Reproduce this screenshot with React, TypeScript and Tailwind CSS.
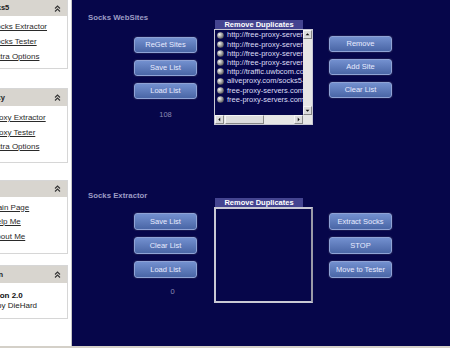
import React from "react";

const Chevron = () => (
  <svg width="7" height="7" viewBox="0 0 7 7" className="shrink-0">
    <path d="M1 3.5 L3.5 1 L6 3.5 M1 6.5 L3.5 4 L6 6.5" fill="none" stroke="#333" strokeWidth="1.1" />
  </svg>
);

const Panel = ({
  title,
  titleMl,
  headerH,
  mt,
  bodyCls,
  children,
}: {
  title: string;
  titleMl: string;
  headerH: string;
  mt: string;
  bodyCls: string;
  children: React.ReactNode;
}) => (
  <div className={`${mt} ml-[-40px] w-[108px] border border-[#d6d6d6] bg-white`}>
    <div className={`${headerH} flex items-center bg-[#d8d5cf]`}>
      <span className={`${titleMl} flex-1 whitespace-nowrap text-[7.5px] font-bold text-[#222]`}>{title}</span>
      <span className="mr-[6px]">
        <Chevron />
      </span>
    </div>
    <div className={bodyCls}>{children}</div>
  </div>
);

const Link = ({ t }: { t: string }) => (
  <div className="ml-[30px] whitespace-nowrap text-[8px] text-[#2a2a2a] underline">{t}</div>
);

const Btn = ({ t, h = "h-[16px]" }: { t: string; h?: string }) => (
  <div
    className={`${h} flex w-[63px] items-center justify-center rounded-[3px] border border-[#8fa3d6] bg-linear-to-b from-[#7390cf] to-[#4a66a6] text-[7.5px] text-[#e8ebff] shadow-[0_0_0_1px_#161650]`}
  >
    {t}
  </div>
);

const Globe = () => (
  <svg width="7" height="7" viewBox="0 0 7 7" className="shrink-0">
    <defs>
      <radialGradient id="g" cx="0.35" cy="0.35" r="0.7">
        <stop offset="0" stopColor="#f4f4f4" />
        <stop offset="0.6" stopColor="#9a9a9a" />
        <stop offset="1" stopColor="#555" />
      </radialGradient>
    </defs>
    <circle cx="3.5" cy="3.5" r="3.3" fill="url(#g)" />
  </svg>
);

const Arrow = ({ dir }: { dir: "up" | "down" | "left" | "right" }) => {
  const d =
    dir === "up"
      ? "M2 5.5 L4.5 3 L7 5.5 Z"
      : dir === "down"
      ? "M2 3.5 L4.5 6 L7 3.5 Z"
      : dir === "left"
      ? "M5.5 2 L3 4.5 L5.5 7 Z"
      : "M3.5 2 L6 4.5 L3.5 7 Z";
  return (
    <div className="flex h-[9px] w-[9px] items-center justify-center border border-[#f4f4f4] border-b-[#888] border-r-[#888] bg-[#dcdcdc]">
      <svg width="9" height="9" viewBox="0 0 9 9">
        <path d={d} fill="#111" />
      </svg>
    </div>
  );
};

const urls = [
  "http://free-proxy-servers.com/",
  "http://free-proxy-servers.com/",
  "http://free-proxy-servers.com/",
  "http://free-proxy-servers.com/",
  "http://traffic.uwbcom.com/",
  "aliveproxy.com/socks5-list/",
  "free-proxy-servers.com/socks",
  "free-proxy-servers.com/socks",
];

export default function App() {
  return (
    <div className="flex h-[348px] w-[450px] flex-col overflow-hidden font-['Liberation_Sans',Arial,sans-serif]">
      <div className="flex h-[346px]">
        {/* sidebar */}
        <div className="w-[72px] shrink-0 overflow-hidden border-r border-[#c4c4c4] bg-white">
          <Panel title="Socks5" titleMl="ml-[22px]" headerH="h-[16px]" mt="mt-[-1px]" bodyCls="pt-[3px] pb-[4px] leading-[15px]">
            <Link t="Socks Extractor" />
            <Link t="Socks Tester" />
            <Link t="Extra Options" />
          </Panel>
          <Panel title="Proxy" titleMl="ml-[23px]" headerH="h-[17px]" mt="mt-[19px]" bodyCls="pt-[5px] pb-[7px] leading-[14.5px]">
            <Link t="Proxy Extractor" />
            <Link t="Proxy Tester" />
            <Link t="Extra Options" />
          </Panel>
          <Panel title="Menu" titleMl="ml-[10px]" headerH="h-[16px]" mt="mt-[17px]" bodyCls="pt-[4px] pb-[9px] leading-[14.5px]">
            <Link t="Main Page" />
            <Link t="Help Me" />
            <Link t="About Me" />
          </Panel>
          <Panel title="Version" titleMl="ml-[15px]" headerH="h-[17px]" mt="mt-[11px]" bodyCls="pt-[8px] pb-[7px] leading-[10px]">
            <div className="ml-[19.5px] whitespace-nowrap text-[8px] font-bold text-[#111]">Version 2.0</div>
            <div className="ml-[36px] whitespace-nowrap text-[8px] text-[#222]">by DieHard</div>
          </Panel>
        </div>

        {/* main */}
        <div className="flex-1 bg-[#06064a]">
          {/* section 1 */}
          <div className="flex items-start">
            <div className="w-[142px] shrink-0">
              <div className="ml-[16px] mt-[14px] whitespace-nowrap text-[7.8px] font-bold leading-[8px] text-[#9c9cc4]">
                Socks WebSites
              </div>
              <div className="ml-[62px] mt-[15px] flex w-[63px] flex-col gap-[7px]">
                <Btn t="ReGet Sites" />
                <Btn t="Save List" />
                <Btn t="Load List" />
              </div>
              <div className="ml-[62px] mt-[12px] w-[63px] text-center text-[7.5px] leading-[8px] text-[#8a8ab4]">108</div>
            </div>
            <div className="mt-[20px] w-[99px]">
              <div className="ml-[1px] h-[9px] w-[88px] bg-[#444490] text-center text-[7.5px] font-bold leading-[9px] text-white">
                Remove Duplicates
              </div>
              <div className="flex h-[96px] flex-col border border-[#c8c8d4] bg-[#06064a]">
                <div className="flex min-h-0 flex-1">
                  <div className="min-w-0 flex-1 overflow-hidden pt-[0.5px]">
                    {urls.map((u, i) => (
                      <div key={i} className="flex h-[9.2px] items-center gap-[3px] pl-[2px] whitespace-nowrap text-[7.5px] text-[#dcdcf4]">
                        <Globe />
                        <span>{u}</span>
                      </div>
                    ))}
                  </div>
                  <div className="flex w-[9px] flex-col bg-[#e6e6e6]">
                    <Arrow dir="up" />
                    <div className="flex-1" />
                    <Arrow dir="down" />
                  </div>
                </div>
                <div className="flex h-[9px] bg-[#e6e6e6]">
                  <Arrow dir="left" />
                  <div className="ml-[1px] h-[9px] w-[39px] border border-[#f4f4f4] border-b-[#888] border-r-[#888] bg-[#dcdcdc]" />
                  <div className="flex-1" />
                  <Arrow dir="right" />
                  <div className="w-[9px] bg-[#e6e6e6]" />
                </div>
              </div>
            </div>
            <div className="ml-[16px] mt-[36px] flex flex-col gap-[7px]">
              <Btn t="Remove" />
              <Btn t="Add Site" />
              <Btn t="Clear List" />
            </div>
          </div>

          {/* section 2 */}
          <div className="mt-[53px] flex items-start">
            <div className="w-[142px] shrink-0">
              <div className="ml-[16px] mt-[14px] whitespace-nowrap text-[7.8px] font-bold leading-[8px] text-[#9c9cc4]">
                Socks Extractor
              </div>
              <div className="ml-[62px] mt-[13px] flex w-[63px] flex-col gap-[7px]">
                <Btn t="Save List" h="h-[17px]" />
                <Btn t="Clear List" h="h-[17px]" />
                <Btn t="Load List" h="h-[17px]" />
              </div>
              <div className="ml-[69px] mt-[10px] w-[63px] text-center text-[7.5px] leading-[8px] text-[#8a8ab4]">0</div>
            </div>
            <div className="mt-[20px] w-[99px]">
              <div className="ml-[1px] h-[9px] w-[88px] bg-[#444490] text-center text-[7.5px] font-bold leading-[9px] text-white">
                Remove Duplicates
              </div>
              <div className="h-[96px] border-2 border-[#c8c8d4] border-r-[#9a9aa8] bg-[#06064a]" />
            </div>
            <div className="ml-[16px] mt-[35px] flex flex-col gap-[7px]">
              <Btn t="Extract Socks" h="h-[17px]" />
              <Btn t="STOP" h="h-[17px]" />
              <Btn t="Move to Tester" h="h-[17px]" />
            </div>
          </div>
        </div>
      </div>
      <div className="h-[2px] bg-[#d4d0c8]" />
    </div>
  );
}
